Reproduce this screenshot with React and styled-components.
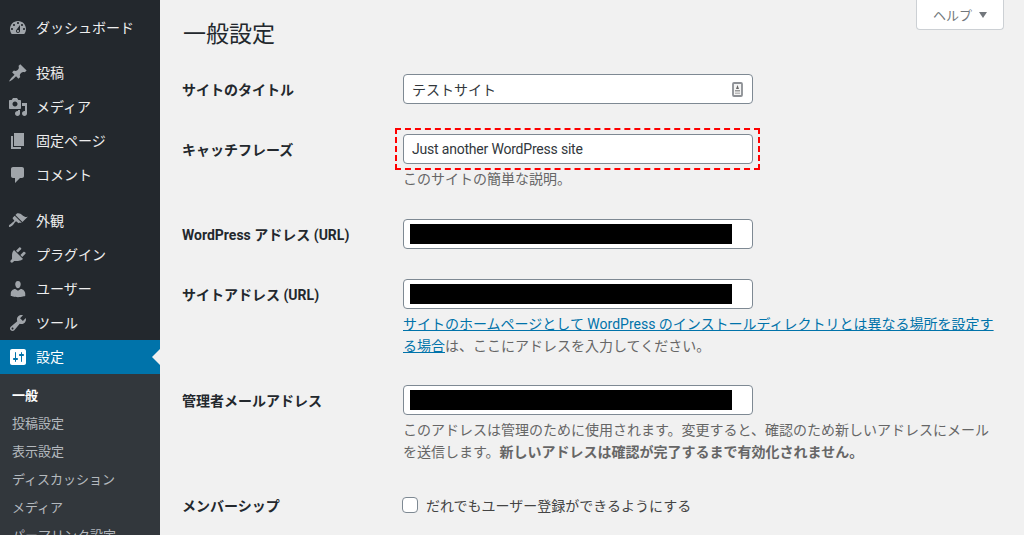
import React from 'react';
import styled, { createGlobalStyle } from 'styled-components';

const FONT = 'Roboto, "Noto Sans CJK JP", sans-serif';

const GlobalStyle = createGlobalStyle`
  html, body {
    margin: 0;
    padding: 0;
    height: 100%;
    overflow: hidden;
    background: #f1f1f1;
    font-family: ${FONT};
  }
`;

const Page = styled.div`
  display: flex;
  height: 535px;
  overflow: hidden;
`;

const Sidebar = styled.nav`
  flex: 0 0 160px;
  background: #23282d;
  padding-top: 11px;
  overflow: hidden;
`;

const MenuGroup = styled.ul`
  list-style: none;
  margin: 0 0 ${(p) => p.$gap || 0}px;
  padding: 0;
`;

const MenuItem = styled.li`
  position: relative;
  display: flex;
  align-items: center;
  gap: 8px;
  height: 34px;
  padding-left: 8px;
  font-size: 14px;
  color: ${(p) => (p.$active ? '#fff' : '#eee')};
  background: ${(p) => (p.$active ? '#0073aa' : 'transparent')};

  svg {
    flex: none;
    fill: ${(p) => (p.$active ? '#fff' : '#a0a5aa')};
  }
`;

const MenuText = styled.span`
  padding-bottom: 2px;
`;

const ActiveArrow = styled.span`
  position: absolute;
  right: 0;
  top: 9px;
  border: 8px solid transparent;
  border-right-color: #f1f1f1;
  border-left-width: 0;
`;

const SubMenu = styled.ul`
  list-style: none;
  margin: 0;
  padding: 7px 0;
  background: #32373c;
`;

const SubItem = styled.li`
  height: 28px;
  line-height: 29px;
  padding-left: 12px;
  font-size: 13px;
  font-weight: ${(p) => (p.$current ? 700 : 400)};
  color: ${(p) => (p.$current ? '#fff' : 'rgba(240, 245, 250, 0.7)')};
`;

const Main = styled.main`
  flex: 1;
  min-width: 0;
  padding: 0 20px 0 22px;
  color: #444;
  font-size: 14px;
`;

const Header = styled.header`
  display: flex;
  justify-content: space-between;
  align-items: flex-start;
  height: 59px;
`;

const Title = styled.h1`
  margin: 18px 0 0 1px;
  font-size: 23px;
  line-height: 34px;
  font-weight: 400;
  color: #23282d;
`;

const HelpTab = styled.button`
  display: flex;
  align-items: center;
  justify-content: space-between;
  width: 88px;
  height: 30px;
  padding: 0 16px;
  border: 1px solid #ccd0d4;
  border-top: 0;
  border-radius: 0 0 4px 4px;
  background: #fff;
  color: #72777c;
  font-family: ${FONT};
  font-size: 13px;
`;

const Caret = styled.span`
  border: 4px solid transparent;
  border-top: 6px solid #72777c;
  border-bottom: 0;
`;

const FormRow = styled.div`
  display: grid;
  grid-template-columns: 221px 1fr;
  padding: 15px 0;
`;

const Label = styled.div`
  font-size: 14px;
  font-weight: 700;
  line-height: 32px;
  height: 30px;
  color: #23282d;
`;

const FieldBox = styled.div`
  position: relative;
  width: 350px;
  height: 30px;
`;

const TextInput = styled.input`
  box-sizing: border-box;
  display: block;
  width: 100%;
  height: 30px;
  padding: 0 8px;
  border: 1px solid #7e8993;
  border-radius: 4px;
  background: #fff;
  color: #32373c;
  font-family: ${FONT};
  font-size: 14px;
  letter-spacing: ${(p) => p.$tracking || 0}px;
  outline: none;
`;

const Redaction = styled.div`
  position: absolute;
  left: 7px;
  top: 5px;
  width: 322px;
  height: 20px;
  background: #000;
`;

const KeyIcon = styled.svg`
  position: absolute;
  right: 10px;
  top: 8px;
`;

const Highlight = styled.div`
  position: absolute;
  inset: -6px -7px -6px -8px;
  border: 2px dashed #f00;
  pointer-events: none;
`;

const Description = styled.p`
  width: 592px;
  margin: 4px 0 ${(p) => p.$trim || -1}px;
  font-size: 14px;
  line-height: 22px;
  color: #666;
`;

const HelpLink = styled.a`
  color: #0073aa;
  text-decoration: underline;
`;

const CheckLabel = styled.label`
  display: flex;
  align-items: center;
  gap: 8px;
  height: 30px;
  color: #444;
`;

const Checkbox = styled.input`
  appearance: none;
  flex: none;
  width: 16px;
  height: 16px;
  margin: 0 0 0 -1px;
  border: 1px solid #7e8993;
  border-radius: 4px;
  background: #fff;
`;

const icons = {
  dashboard:
    'M3.76 16h12.48c1.1-1.37 1.76-3.11 1.76-5 0-4.42-3.58-8-8-8s-8 3.58-8 8c0 1.89.66 3.63 1.76 5zM10 4c.55 0 1 .45 1 1s-.45 1-1 1-1-.45-1-1 .45-1 1-1zM6 6c.55 0 1 .45 1 1s-.45 1-1 1-1-.45-1-1 .45-1 1-1zm8 0c.55 0 1 .45 1 1s-.45 1-1 1-1-.45-1-1 .45-1 1-1zm-5.37 5.55L12 7v6c0 1.1-.9 2-2 2s-2-.9-2-2c0-.57.24-1.08.63-1.45zM4 10c.55 0 1 .45 1 1s-.45 1-1 1-1-.45-1-1 .45-1 1-1zm12 0c.55 0 1 .45 1 1s-.45 1-1 1-1-.45-1-1 .45-1 1-1zm-5 3c0-.55-.45-1-1-1s-1 .45-1 1 .45 1 1 1 1-.45 1-1z',
  pin:
    'M10.44 3.02l1.82-1.82 6.36 6.35-1.83 1.82c-1.05-.68-2.48-.57-3.41.36l-.75.75c-.92.93-1.04 2.35-.35 3.41l-1.83 1.82-2.41-2.41-2.8 2.79c-.42.42-3.38 2.71-3.8 2.29s1.86-3.39 2.28-3.81l2.79-2.79L4.1 9.36l1.83-1.82c1.05.69 2.48.57 3.4-.36l.75-.75c.93-.92 1.05-2.35.36-3.41z',
  media:
    'M13 11V4c0-.55-.45-1-1-1h-1.67L9 1H5L3.67 3H2c-.55 0-1 .45-1 1v7c0 .55.45 1 1 1h10c.55 0 1-.45 1-1zM7 4.5c1.38 0 2.5 1.12 2.5 2.5S8.38 9.5 7 9.5 4.5 8.38 4.5 7 5.62 4.5 7 4.5zM14 6h5v10.5c0 1.38-1.12 2.5-2.5 2.5S14 17.88 14 16.5s1.12-2.5 2.5-2.5c.17 0 .34.02.5.05V9h-3V6zm-4 8.05V13h2v3.5c0 1.38-1.12 2.5-2.5 2.5S7 17.88 7 16.5 8.12 14 9.5 14c.17 0 .34.02.5.05z',
  page: 'M6 15V2h10v13H6zm-1 1h8v2H3V5h2v11z',
  comments:
    'M5 2h9c1.1 0 2 .9 2 2v7c0 1.1-.9 2-2 2h-2l-5 5v-5H5c-1.1 0-2-.9-2-2V4c0-1.1.9-2 2-2z',
  appearance:
    'M14.48 11.06L7.41 3.99l1.5-1.5c.5-.56 2.3-.47 3.51.32 1.21.8 1.43 1.28 2.91 2.1 1.18.64 2.45 1.26 4.45.85zm-.71.71L6.7 4.7 4.93 6.47c-.39.39-.39 1.02 0 1.41l1.06 1.06c.39.39.39 1.03 0 1.42-.6.6-1.43 1.11-2.21 1.69-.35.26-.7.53-1.01.84C1.43 13.23.4 14.96 1.1 15.66c.7.7 2.44-.32 3.78-1.66.31-.31.58-.66.84-1.01.58-.78 1.09-1.61 1.69-2.21.39-.39 1.02-.39 1.41 0l1.06 1.06c.39.39 1.02.39 1.41 0z',
  plugins:
    'M13.11 4.36L9.87 7.6 8 5.73l3.24-3.24c.35-.34 1.05-.2 1.56.32.52.51.66 1.21.31 1.55zm-8 1.77l.91-1.12 9.01 9.01-1.19.84c-.71.71-2.63 1.16-3.82 1.16H6.14L4.9 17.26c-.59.59-1.54.59-2.12 0-.59-.58-.59-1.53 0-2.12l1.24-1.24v-3.88c0-1.13.4-3.19 1.09-3.89zm7.26 3.97l3.24-3.24c.34-.35 1.04-.21 1.55.31.52.51.66 1.21.31 1.55l-3.24 3.25z',
  users:
    'M10 9.25c-2.27 0-2.73-3.44-2.73-3.44C7 4.02 7.82 2 9.97 2c2.16 0 2.98 2.02 2.71 3.81 0 0-.41 3.44-2.68 3.44zm0 2.57L12.72 10c2.39 0 4.52 2.33 4.52 4.53v2.49s-3.65 1.13-7.24 1.13c-3.65 0-7.24-1.13-7.24-1.13v-2.49c0-2.25 1.94-4.48 4.47-4.48z',
  tools:
    'M16.68 9.77c-1.34 1.34-3.3 1.67-4.95.99l-5.41 6.52c-.99.99-2.59.99-3.58 0s-.99-2.59 0-3.57l6.52-5.42c-.68-1.65-.35-3.61.99-4.95 1.28-1.28 3.12-1.62 4.72-1.06l-2.89 2.89 2.82 2.82 2.86-2.87c.53 1.58.18 3.39-1.08 4.65zM3.81 16.21c.4.39 1.04.39 1.43 0 .4-.4.4-1.04 0-1.43-.39-.4-1.03-.4-1.43 0-.39.39-.39 1.03 0 1.43z',
  settings:
    'M18 16V4c0-1.1-.9-2-2-2H4c-1.1 0-2 .9-2 2v12c0 1.1.9 2 2 2h12c1.1 0 2-.9 2-2zM8 11h1c.55 0 1 .45 1 1s-.45 1-1 1H8v1.5c0 .28-.22.5-.5.5s-.5-.22-.5-.5V13H6c-.55 0-1-.45-1-1s.45-1 1-1h1V5.5c0-.28.22-.5.5-.5s.5.22.5.5V11zm5-2h-1c-.55 0-1-.45-1-1s.45-1 1-1h1V5.5c0-.28.22-.5.5-.5s.5.22.5.5V7h1c.55 0 1 .45 1 1s-.45 1-1 1h-1v5.5c0 .28-.22.5-.5.5s-.5-.22-.5-.5V9z',
};

const MenuIcon = ({ name }) => (
  <svg width="20" height="20" viewBox="0 0 20 20">
    <path d={icons[name]} />
  </svg>
);

const Item = ({ icon, label, active }) => (
  <MenuItem $active={active}>
    <MenuIcon name={icon} />
    <MenuText>{label}</MenuText>
    {active && <ActiveArrow />}
  </MenuItem>
);

const subItems = ['投稿設定', '表示設定', 'ディスカッション', 'メディア', 'パーマリンク設定'];

const App = () => (
  <>
    <GlobalStyle />
    <Page>
      <Sidebar>
        <MenuGroup $gap={11}>
          <Item icon="dashboard" label="ダッシュボード" />
        </MenuGroup>
        <MenuGroup $gap={12}>
          <Item icon="pin" label="投稿" />
          <Item icon="media" label="メディア" />
          <Item icon="page" label="固定ページ" />
          <Item icon="comments" label="コメント" />
        </MenuGroup>
        <MenuGroup>
          <Item icon="appearance" label="外観" />
          <Item icon="plugins" label="プラグイン" />
          <Item icon="users" label="ユーザー" />
          <Item icon="tools" label="ツール" />
          <Item icon="settings" label="設定" active />
        </MenuGroup>
        <SubMenu>
          <SubItem $current>一般</SubItem>
          {subItems.map((text) => (
            <SubItem key={text}>{text}</SubItem>
          ))}
        </SubMenu>
      </Sidebar>
      <Main>
        <Header>
          <Title>一般設定</Title>
          <HelpTab>
            ヘルプ
            <Caret />
          </HelpTab>
        </Header>

        <FormRow>
          <Label>サイトのタイトル</Label>
          <FieldBox>
            <TextInput readOnly defaultValue="テストサイト" />
            <KeyIcon width="11" height="15" viewBox="0 0 11 15">
              <rect x="1" y="1" width="9" height="13" rx="1" fill="#f4f4f4" stroke="#8c8f94" strokeWidth="1.8" />
              <path d="M5.5 3 7 7H4z" fill="#666" />
              <rect x="3" y="8" width="5" height="1.5" fill="#999" />
              <rect x="3" y="10.5" width="5" height="1.5" fill="#bbb" />
            </KeyIcon>
          </FieldBox>
        </FormRow>

        <FormRow>
          <Label>キャッチフレーズ</Label>
          <div>
            <FieldBox>
              <TextInput readOnly defaultValue="Just another WordPress site" $tracking={-0.2} />
              <Highlight />
            </FieldBox>
            <Description>このサイトの簡単な説明。</Description>
          </div>
        </FormRow>

        <FormRow>
          <Label>WordPress アドレス (URL)</Label>
          <FieldBox>
            <TextInput readOnly />
            <Redaction />
          </FieldBox>
        </FormRow>

        <FormRow>
          <Label>サイトアドレス (URL)</Label>
          <div>
            <FieldBox>
              <TextInput readOnly />
              <Redaction />
            </FieldBox>
            <Description $trim={-2}>
              <HelpLink href="#">
                サイトのホームページとして WordPress のインストールディレクトリとは異なる場所を設定する場合
              </HelpLink>
              は、ここにアドレスを入力してください。
            </Description>
          </div>
        </FormRow>

        <FormRow>
          <Label>管理者メールアドレス</Label>
          <div>
            <FieldBox>
              <TextInput readOnly />
              <Redaction />
            </FieldBox>
            <Description $trim={-3}>
              このアドレスは管理のために使用されます。変更すると、確認のため新しいアドレスにメールを送信します。
              <strong>新しいアドレスは確認が完了するまで有効化されません。</strong>
            </Description>
          </div>
        </FormRow>

        <FormRow>
          <Label>メンバーシップ</Label>
          <CheckLabel>
            <Checkbox type="checkbox" />
            だれでもユーザー登録ができるようにする
          </CheckLabel>
        </FormRow>
      </Main>
    </Page>
  </>
);

export default App;
